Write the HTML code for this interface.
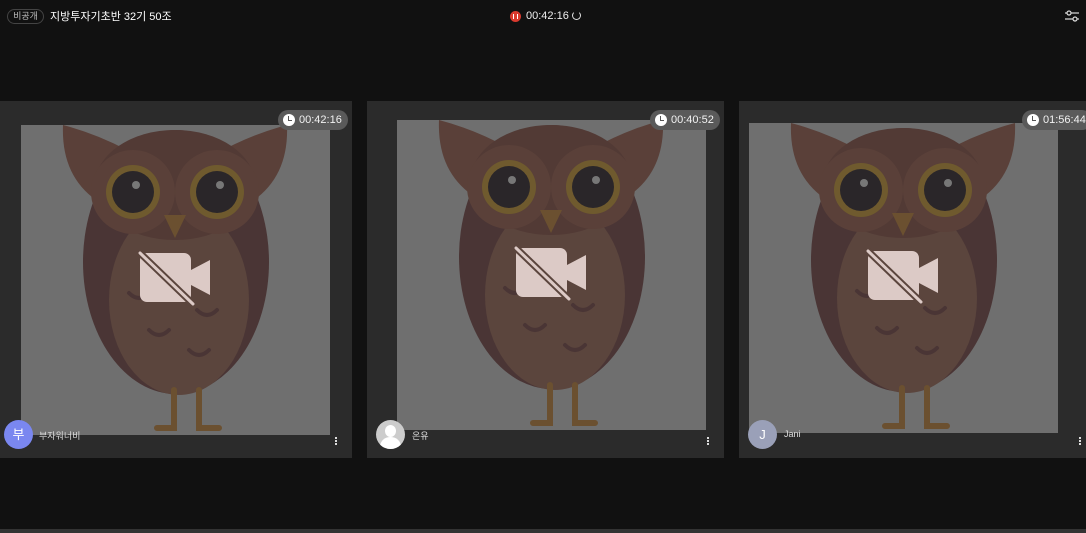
<!DOCTYPE html>
<html><head><meta charset="utf-8"><style>
*{margin:0;padding:0;box-sizing:border-box}
body{width:1086px;height:533px;background:#111;overflow:hidden;position:relative;font-family:"Liberation Sans","Noto Sans CJK KR",sans-serif;color:#eee}
.abs{position:absolute}
.tile{position:absolute;top:101px;height:357px;background:#2b2b2b}
.img{position:absolute;width:309px;height:310px;background:#6f6f6f;overflow:visible}
.time{position:absolute;height:20px;border-radius:10px;background:#5a5a5a;font-size:11px;color:#f2f2f2;line-height:20px;padding:0 6px 0 21px}
.time:before{content:"";position:absolute;left:5px;top:4px;width:12px;height:12px;border-radius:50%;background:#fff}
.time:after{content:"";position:absolute;left:10px;top:6px;width:3px;height:4px;border-left:1.5px solid #555;border-bottom:1.5px solid #555}
.av{position:absolute;width:29px;height:29px;border-radius:50%;font-size:13px;color:#fff;text-align:center;line-height:29px}
.name{position:absolute;font-size:9px;color:#ddd}
.dots{position:absolute;width:2px;height:2px;background:#ddd;box-shadow:0 3px #ddd,0 6px #ddd}
</style></head><body>
<svg width="0" height="0" style="position:absolute"><defs>
<g id="owl">
<path d="M42 0 Q40 50 75 75 L115 30 Q80 10 42 0 Z" fill="#5a4039"/>
<path d="M266 0 Q268 50 233 75 L193 30 Q228 10 266 0 Z" fill="#5a4039"/>
<ellipse cx="155" cy="137" rx="93" ry="132" fill="#4a3535"/>
<ellipse cx="158" cy="175" rx="70" ry="95" fill="#5b453d"/>
<ellipse cx="154" cy="60" rx="80" ry="55" fill="#523a35"/>
<circle cx="112" cy="67" r="42" fill="#5a4039"/>
<circle cx="196" cy="67" r="42" fill="#5a4039"/>
<circle cx="112" cy="67" r="27" fill="#6f5a2e"/>
<circle cx="196" cy="67" r="27" fill="#6f5a2e"/>
<circle cx="112" cy="67" r="21" fill="#2a2629"/>
<circle cx="196" cy="67" r="21" fill="#2a2629"/>
<circle cx="115" cy="60" r="4" fill="#777"/>
<circle cx="199" cy="60" r="4" fill="#777"/>
<path d="M143 90 L165 90 L154 113 Z" fill="#6b5030"/>
<g fill="none" stroke="#4a3535" stroke-width="4" stroke-linecap="round">
<path d="M176 185 q10 10 20 0"/><path d="M128 205 q10 10 20 0"/><path d="M168 225 q10 10 20 0"/><path d="M108 168 q10 10 20 0"/>
</g>
<g fill="none" stroke="#6b5030" stroke-width="6" stroke-linecap="round">
<path d="M153 265 V303 H136"/><path d="M178 265 V303 H198"/>
</g>
<rect x="119" y="128" width="51" height="49" rx="7" fill="#dccac6"/>
<path d="M170 145 L189 135 V170 L170 160 Z" fill="#dccac6"/>
<path d="M119 128 L172 179" stroke="#5b453d" stroke-width="7"/>
<path d="M119 128 L172 179" stroke="#dccac6" stroke-width="3" stroke-linecap="round"/>
</g></defs></svg>

<div class="abs" style="left:7px;top:9px;width:37px;height:15px;border:1px solid #444;border-radius:8px;font-size:9px;color:#bbb;text-align:center;line-height:13px">비공개</div>
<div class="abs" style="left:50px;top:8px;font-size:11px;color:#fff">지방투자기초반 32기 50조</div>
<div class="abs" style="left:510px;top:11px;width:11px;height:11px;border-radius:50%;background:#d93a2e"><div class="abs" style="left:3px;top:3px;width:5px;height:5px;border-left:1.5px solid #fff;border-right:1.5px solid #fff"></div></div>
<div class="abs" style="left:526px;top:10px;font-size:11px;color:#eee">00:42:16</div>
<div class="abs" style="left:572px;top:11px;width:9px;height:9px;border:1.5px solid #ddd;border-top-color:transparent;border-radius:50%"></div>
<svg class="abs" style="left:1064px;top:10px" width="16" height="12"><g stroke="#ddd" stroke-width="1.2" fill="#111"><line x1="1" y1="3" x2="15" y2="3"/><line x1="1" y1="9" x2="15" y2="9"/><circle cx="5" cy="3" r="2"/><circle cx="11" cy="9" r="2"/></g></svg>

<div class="tile" style="left:0;width:352px">
 <svg class="img" style="left:21px;top:24px" viewBox="0 0 309 310"><use href="#owl"/></svg>
 <div class="time" style="left:278px;top:9px">00:42:16</div>
 <div class="av" style="left:4px;top:319px;background:#7a87f0">부</div>
 <div class="name" style="left:39px;top:328px">부자워너비</div>
 <div class="dots" style="left:335px;top:336px"></div>
</div>
<div class="tile" style="left:367px;width:357px">
 <svg class="img" style="left:30px;top:19px" viewBox="0 0 309 310"><use href="#owl"/></svg>
 <div class="time" style="left:283px;top:9px">00:40:52</div>
 <div class="av" style="left:9px;top:319px;background:#ccc;overflow:hidden"><div class="abs" style="left:9px;top:5px;width:11px;height:12px;border-radius:50%;background:#fff"></div><div class="abs" style="left:4px;top:17px;width:21px;height:16px;border-radius:10px 10px 0 0;background:#fff"></div></div>
 <div class="name" style="left:45px;top:328px">온유</div>
 <div class="dots" style="left:340px;top:336px"></div>
</div>
<div class="tile" style="left:739px;width:347px">
 <svg class="img" style="left:10px;top:22px" viewBox="0 0 309 310"><use href="#owl"/></svg>
 <div class="time" style="left:283px;top:9px">01:56:44</div>
 <div class="av" style="left:9px;top:319px;background:#9aa0b8">J</div>
 <div class="name" style="left:45px;top:328px">Jani</div>
 <div class="dots" style="left:340px;top:336px"></div>
</div>
<div class="abs" style="left:0;top:529px;width:1086px;height:4px;background:#333"></div>
</body></html>
